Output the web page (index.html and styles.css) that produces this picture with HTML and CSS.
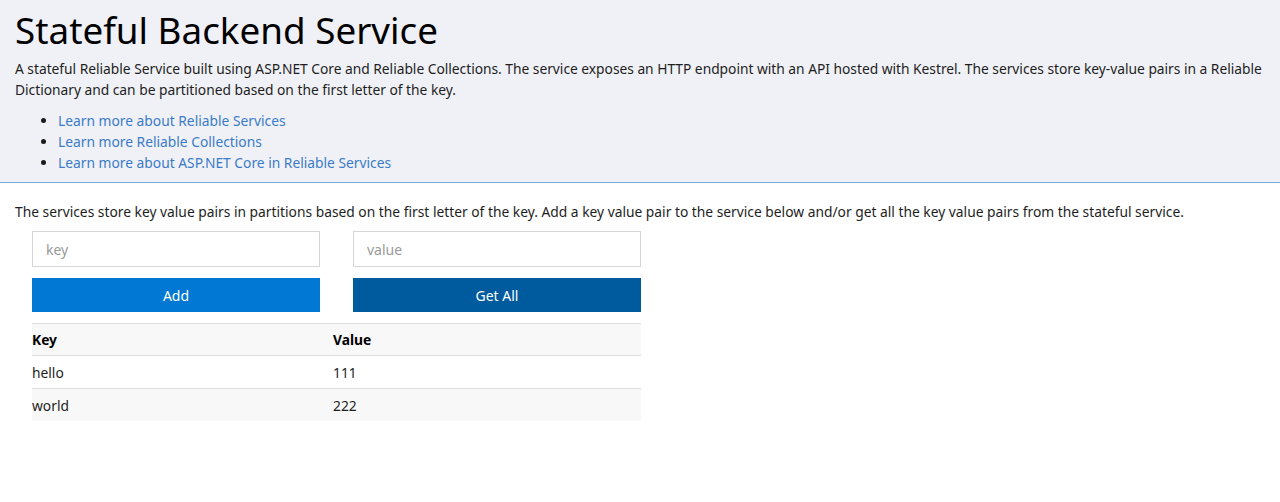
FILE: index.html
```html
<!DOCTYPE html>
<html>
<head>
<meta charset="utf-8">
<link rel="stylesheet" href="styles.css">
</head>
<body>
<header class="intro">
  <h1 class="title">Stateful Backend Service</h1>
  <p class="lead">A stateful Reliable Service built using ASP.NET Core and Reliable Collections. The service exposes an HTTP endpoint with an API hosted with Kestrel. The services store key-value pairs in a Reliable Dictionary and can be partitioned based on the first letter of the key.</p>
  <ul class="links">
    <li><a href="#">Learn more about Reliable Services</a></li>
    <li><a href="#">Learn more Reliable Collections</a></li>
    <li><a href="#">Learn more about ASP.NET Core in Reliable Services</a></li>
  </ul>
</header>
<main class="content">
  <p class="desc">The services store key value pairs in partitions based on the first letter of the key. Add a key value pair to the service below and/or get all the key value pairs from the stateful service.</p>
  <div class="panel">
    <div class="form">
      <input class="field" type="text" placeholder="key">
      <input class="field" type="text" placeholder="value">
      <button class="btn btn-add">Add</button>
      <button class="btn btn-get">Get All</button>
    </div>
    <table class="kv">
      <thead>
        <tr><th class="col-key">Key</th><th>Value</th></tr>
      </thead>
      <tbody>
        <tr><td>hello</td><td>111</td></tr>
        <tr><td>world</td><td>222</td></tr>
      </tbody>
    </table>
  </div>
</main>
</body>
</html>
```
FILE: styles.css
```css
html, body {
  margin: 0;
  padding: 0;
  background: #ffffff;
}
body {
  font-family: "Segoe UI", "Noto Sans", "Open Sans", sans-serif;
  font-size: 13.8px;
  color: #1b1b1b;
}
.intro {
  box-sizing: border-box;
  background: #f0f1f6;
  border-bottom: 1px solid #7fa9dc;
  padding: 7px 8px 0 15px;
  height: 183px;
}
.title {
  margin: 0;
  font-size: 36.8px;
  font-weight: 400;
  line-height: 47px;
  color: #000;
}
.lead {
  margin: 4px 0 10px;
  line-height: 21px;
  color: #1e1e1e;
  letter-spacing: -0.02px;
}
.links {
  margin: 0;
  padding-left: 43px;
  line-height: 21px;
}
.links a {
  color: #3a7bc8;
  text-decoration: none;
}
.content {
  padding: 18px 15px 0;
}
.desc {
  margin: 0 0 9px;
  line-height: 21px;
  color: #1e1e1e;
}
.panel {
  margin-left: 17px;
  width: 609px;
}
.form {
  display: grid;
  grid-template-columns: 288px 288px;
  column-gap: 33px;
  row-gap: 11px;
}
.field {
  box-sizing: border-box;
  height: 36px;
  border: 1px solid #d6d6d6;
  padding: 0 13px;
  font-family: inherit;
  font-size: 14px;
  color: #333;
  outline: none;
}
.field::placeholder {
  color: #9a9a9a;
}
.btn {
  height: 34px;
  border: 0;
  color: #fff;
  font-family: inherit;
  font-size: 14px;
  padding: 0;
}
.btn-add {
  background: #0078d4;
}
.btn-get {
  background: #005a9e;
}
.kv {
  margin-top: 11px;
  width: 609px;
  border-collapse: collapse;
  border-top: 1px solid #dcdcdc;
}
.kv th, .kv td {
  text-align: left;
  padding: 0;
  border-bottom: 1px solid #dddddd;
}
.kv th {
  height: 31px;
  font-weight: 700;
  color: #000;
}
.kv td {
  height: 32px;
  color: #1e1e1e;
}
.col-key {
  width: 301px;
}
.kv thead tr, .kv tbody tr:nth-child(2) {
  background: #f8f8f8;
}
.kv tbody tr:last-child td {
  border-bottom: 0;
}
```
